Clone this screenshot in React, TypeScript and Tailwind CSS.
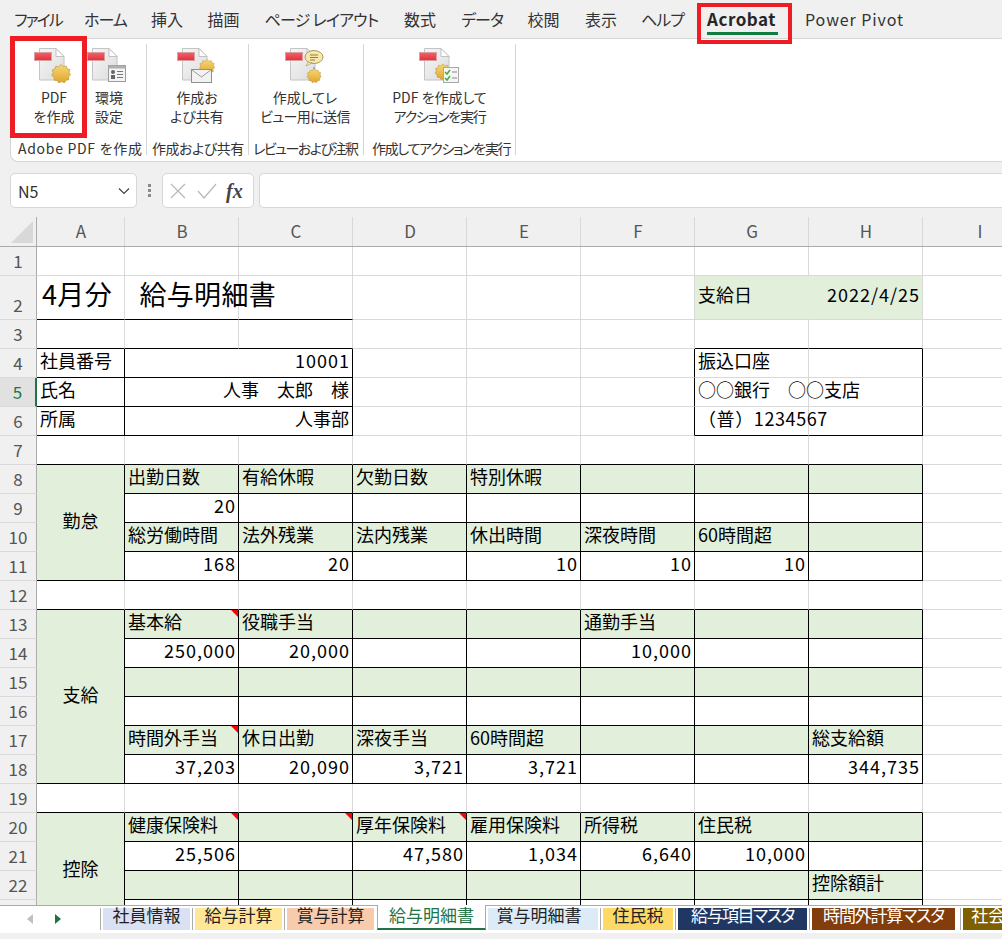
import { ReactNode } from "react";

const jp = "[font-family:'Noto_Sans_CJK_JP','Noto_Sans',sans-serif]";

const COLS = ["A", "B", "C", "D", "E", "F", "G", "H", "I"];

const rowHeights: Record<number, string> = { 2: "h-[44px]" };

const notes = ["B13", "B17", "B20", "C20", "D20"];

// cell values by address
const values: Record<string, { t: string; right?: boolean }> = {
  A2: { t: "4月分　給与明細書" },
  G2: { t: "支給日" },
  H2: { t: "2022/4/25", right: true },
  A4: { t: "社員番号" },
  B4: { t: "10001", right: true },
  A5: { t: "氏名" },
  B5: { t: "人事　太郎　様", right: true },
  A6: { t: "所属" },
  B6: { t: "人事部", right: true },
  G4: { t: "振込口座" },
  G5: { t: "○○銀行　○○支店" },
  G6: { t: "（普）1234567" },
  B8: { t: "出勤日数" },
  C8: { t: "有給休暇" },
  D8: { t: "欠勤日数" },
  E8: { t: "特別休暇" },
  B9: { t: "20", right: true },
  B10: { t: "総労働時間" },
  C10: { t: "法外残業" },
  D10: { t: "法内残業" },
  E10: { t: "休出時間" },
  F10: { t: "深夜時間" },
  G10: { t: "60時間超" },
  B11: { t: "168", right: true },
  C11: { t: "20", right: true },
  E11: { t: "10", right: true },
  F11: { t: "10", right: true },
  G11: { t: "10", right: true },
  B13: { t: "基本給" },
  C13: { t: "役職手当" },
  F13: { t: "通勤手当" },
  B14: { t: "250,000", right: true },
  C14: { t: "20,000", right: true },
  F14: { t: "10,000", right: true },
  B17: { t: "時間外手当" },
  C17: { t: "休日出勤" },
  D17: { t: "深夜手当" },
  E17: { t: "60時間超" },
  H17: { t: "総支給額" },
  B18: { t: "37,203", right: true },
  C18: { t: "20,090", right: true },
  D18: { t: "3,721", right: true },
  E18: { t: "3,721", right: true },
  H18: { t: "344,735", right: true },
  B20: { t: "健康保険料" },
  D20: { t: "厚年保険料" },
  E20: { t: "雇用保険料" },
  F20: { t: "所得税" },
  G20: { t: "住民税" },
  B21: { t: "25,506", right: true },
  D21: { t: "47,580", right: true },
  E21: { t: "1,034", right: true },
  F21: { t: "6,640", right: true },
  G21: { t: "10,000", right: true },
  H22: { t: "控除額計" },
};

const greenRows = [8, 10, 13, 15, 17, 20, 22];
const tableRows = (r: number) => (r >= 8 && r <= 11) || (r >= 13 && r <= 18) || (r >= 20 && r <= 23);

const isBottomBlack = (r: number, c: number) => {
  if (c <= 2 && r >= 2 && r <= 6) return true;
  if ((c === 6 || c === 7) && (r === 3 || r === 6)) return true;
  if (c <= 7 && [7, 11, 12, 18, 19].includes(r)) return true;
  if (c >= 1 && c <= 7 && tableRows(r)) return true;
  return false;
};

const isRightBlack = (r: number, c: number) => {
  if (r >= 4 && r <= 6 && (c === 0 || c === 2 || c === 5 || c === 7)) return true;
  if (tableRows(r) && c <= 7) return true;
  return false;
};

const textClass = (addr: string, t: string) => {
  if (addr === "A2") return "pl-[2px] text-[27px] tracking-[0.35px]";
  if (addr === "G6") return "tracking-[0.6px]";
  if (/^[\d,/]+$/.test(t)) return "-mr-[1px] tracking-[1px]";
  return "";
};

function SheetCell({ r, c }: { r: number; c: number }) {
  const addr = COLS[c] + r;
  const value = values[addr];
  const green = (c >= 1 && c <= 7 && greenRows.includes(r)) || (r === 2 && (c === 6 || c === 7));
  return (
    <div
      className={`relative flex items-center whitespace-nowrap border-r border-b px-[3px] text-[18px] leading-none text-black ${
        r === 2 ? "pb-[8px]" : "pb-[6px]"
      } ${rowHeights[r] ?? "h-[29px]"} ${green ? "bg-[#e2efda]" : "bg-white"} ${
        isRightBlack(r, c) ? "border-r-black" : r === 2 && c === 6 ? "border-r-[#e2efda]" : "border-r-[#d9d9d9]"
      } ${isBottomBlack(r, c) ? "border-b-black" : "border-b-[#d9d9d9]"} ${value?.right ? "justify-end" : "justify-start"}`}
    >
      {value ? <span className={`relative z-10 ${textClass(addr, value.t)}`}>{value.t}</span> : null}
      {notes.includes(addr) ? (
        <span className="absolute top-0 right-0 h-[7px] w-[7px] bg-[#ff0000] [clip-path:polygon(0_0,100%_0,100%_100%)]" />
      ) : null}
    </div>
  );
}

function MergedB({ r }: { r: number }) {
  const value = values["B" + r];
  return (
    <div className="col-span-2 flex h-[29px] items-center justify-end whitespace-nowrap border-r border-b border-black bg-white px-[3px] pb-[6px] text-[18px] leading-none text-black">
      <span className={textClass("B" + r, value.t)}>{value.t}</span>
    </div>
  );
}

function GreenMerged({ label, rows }: { label: string; rows: string }) {
  return (
    <div className={`flex items-center justify-center border-r border-b border-black bg-[#e2efda] pb-[5px] text-[18px] text-black ${rows}`}>
      {label}
    </div>
  );
}

function RowHeader({ r }: { r: number }) {
  const active = r === 5;
  return (
    <div
      className={`flex justify-center border-b border-b-[#d9d9d9] text-[17px] leading-none ${rowHeights[r] ?? "h-[29px]"} ${
        r === 2 ? "items-end pb-[6px]" : "items-center pb-[2px]"
      } ${
        active
          ? "border-r-2 border-r-[#217346] bg-[#e1e1e1] text-[#217346]"
          : "border-r border-r-[#ababab] bg-[#f0f0f0] text-[#555555]"
      }`}
    >
      {r}
    </div>
  );
}

function sheetRow(r: number) {
  const cells: ReactNode[] = [<RowHeader key={`h${r}`} r={r} />];
  COLS.forEach((_, c) => {
    if (c === 0 && r >= 9 && r <= 11) return;
    if (c === 0 && r >= 14 && r <= 18) return;
    if (c === 0 && r >= 21 && r <= 23) return;
    if (c === 0 && r === 8) cells.push(<GreenMerged key={`a${r}`} label="勤怠" rows="row-span-4" />);
    else if (c === 0 && r === 13) cells.push(<GreenMerged key={`a${r}`} label="支給" rows="row-span-6" />);
    else if (c === 0 && r === 20) cells.push(<GreenMerged key={`a${r}`} label="控除" rows="row-span-4" />);
    else if (c === 1 && r >= 4 && r <= 6) cells.push(<MergedB key={`b${r}`} r={r} />);
    else if (c === 2 && r >= 4 && r <= 6) return;
    else cells.push(<SheetCell key={`${r}-${c}`} r={r} c={c} />);
  });
  return cells;
}

function Burst({ x, y, s = 1 }: { x: number; y: number; s?: number }) {
  return (
    <g transform={`translate(${x} ${y}) scale(${s})`}>
      <path
        d="M0-9.5 2.4-7.3 5.2-8 6.2-5.3 9-4.4 8-1.6 9.6 0.8 7.5 2.8 7.8 5.8 4.9 6.2 3.4 8.8 0.6 7.6-2.2 9-3.7 6.4-6.7 6.2-6.9 3.2-9.3 1.4-7.8-1.2-8.8-4-6-5-5.2-7.8-2.4-7.2Z"
        fill="url(#gold)"
        stroke="#b98d2a"
        strokeWidth="0.6"
      />
    </g>
  );
}

function DocIcon({ children, className = "" }: { children?: ReactNode; className?: string }) {
  return (
    <svg viewBox="0 0 40 36" className={`h-[36px] w-[40px] shrink-0 ${className}`}>
      <defs>
        <linearGradient id="page" x1="0" y1="0" x2="1" y2="1">
          <stop offset="0" stopColor="#f6f6f6" />
          <stop offset="1" stopColor="#dcdcdc" />
        </linearGradient>
        <linearGradient id="gold" x1="0" y1="0" x2="0" y2="1">
          <stop offset="0" stopColor="#f7d873" />
          <stop offset="1" stopColor="#dfa52e" />
        </linearGradient>
        <linearGradient id="redbar" x1="0" y1="0" x2="0" y2="1">
          <stop offset="0" stopColor="#f4606a" />
          <stop offset="1" stopColor="#e0303c" />
        </linearGradient>
      </defs>
      <path d="M5.5 1.5H22L30 9.5V33H5.5Z" fill="url(#page)" stroke="#c4c4c4" />
      <path d="M22 1.5V9.5H30Z" fill="#ffffff" stroke="#b5b5b5" strokeWidth="0.8" />
      <rect x="0.5" y="5.5" width="17" height="8" fill="url(#redbar)" stroke="#d9a0a0" />
      {children}
    </svg>
  );
}

function RibbonButton({ icon, lines, className }: { icon: ReactNode; lines: ReactNode[]; className: string }) {
  return (
    <div className={`flex flex-col items-center pt-[8px] ${className}`}>
      {icon}
      <div className="mt-[5px] text-center text-[14px] leading-[19px] whitespace-nowrap text-[#333333]">
        {lines.map((line, i) => (
          <div key={i}>{line}</div>
        ))}
      </div>
    </div>
  );
}

function RibbonGroup({
  label,
  width,
  pad,
  labelClass,
  children,
}: {
  label: string;
  width: string;
  pad: string;
  labelClass: string;
  children: ReactNode;
}) {
  return (
    <div className={`relative flex shrink-0 flex-col ${width}`}>
      <div className={`flex flex-1 ${pad}`}>{children}</div>
      <div className={`pb-[4px] text-[14px] leading-[18px] whitespace-nowrap text-[#333333] ${pad} ${labelClass}`}>{label}</div>
      <div className="absolute top-[5px] right-0 h-[111px] w-px bg-[#d5d5d5]" />
    </div>
  );
}

const menu = [
  { t: "ファイル", w: "w-[68px] tracking-[-2px]" },
  { t: "ホーム", w: "w-[67px] tracking-[-1px]" },
  { t: "挿入", w: "w-[56px]" },
  { t: "描画", w: "w-[57px]" },
  { t: "ページ レイアウト", w: "w-[139px] tracking-[-0.8px]" },
  { t: "数式", w: "w-[58px]" },
  { t: "データ", w: "w-[66px] tracking-[-1px]" },
  { t: "校閲", w: "w-[57px]" },
  { t: "表示", w: "w-[58px]" },
  { t: "ヘルプ", w: "w-[65px] tracking-[-1px]" },
];

const tabs = [
  { t: "社員情報", w: "w-[87px]", c: "bg-[#d9e1f2] text-[#222222]", ml: "ml-0" },
  { t: "給与計算", w: "w-[87px]", c: "bg-[#ffe699] text-[#222222]", ml: "ml-[5px]" },
  { t: "賞与計算", w: "w-[87px]", c: "bg-[#f8cbad] text-[#222222]", ml: "ml-[5px]" },
];

const tabsAfter = [
  { t: "賞与明細書", w: "w-[110px] pr-[8px]", c: "bg-[#ddebf7] text-[#222222]", ml: "ml-[2px]" },
  { t: "住民税", w: "w-[70px]", c: "bg-[#ffd966] text-[#222222]", ml: "ml-[5px]" },
  { t: "給与項目マスタ", w: "w-[129px] tracking-[-1.5px]", c: "bg-[#203764] text-white", ml: "ml-[5px]" },
  { t: "時間外計算マスタ", w: "w-[143px] tracking-[-1.2px]", c: "bg-[#833c0b] text-white", ml: "ml-[5px]" },
  { t: "社会保険マスタ", w: "w-[130px]", c: "bg-[#7f6000] text-white", ml: "ml-[8px]" },
];

function SheetTab({ t, w, c, ml }: { t: string; w: string; c: string; ml: string }) {
  return (
    <div
      className={`flex h-[22px] shrink-0 items-start justify-center overflow-visible whitespace-nowrap text-[17px] leading-none ${w} ${c} ${ml} relative before:absolute before:top-0 before:-left-[3px] before:h-[22px] before:w-px before:bg-[#ababab]`}
    >
      <span className="-mt-[2px]">{t}</span>
    </div>
  );
}

export default function App() {
  const rowNumbers = Array.from({ length: 22 }, (_, i) => i + 2);
  return (
    <div className={`relative flex h-[939px] w-[1002px] flex-col overflow-hidden bg-[#f0f0f0] ${jp} [font-feature-settings:'palt']`}>
      {/* menu tabs */}
      <div className="flex h-[38px] shrink-0 items-center pb-[1px] pl-[4px] text-[16px] text-[#333333]">
        {menu.map((item) => (
          <div key={item.t} className={`text-center whitespace-nowrap ${item.w}`}>
            {item.t}
          </div>
        ))}
        <div className="relative h-[24px] w-[93px] text-center text-[17px] leading-[24px] font-bold tracking-[0.5px] text-[#262626]">
          Acrobat
          <span className="absolute top-[25px] left-[12px] h-[3px] w-[71px] bg-[#107c41]" />
        </div>
        <div className="ml-[17px] tracking-[0.9px] whitespace-nowrap">Power Pivot</div>
      </div>

      {/* ribbon */}
      <div className="ml-[10px] flex h-[124px] shrink-0 rounded-bl-[8px] border-t border-b border-l border-[#d5d5d5] bg-white">
        <RibbonGroup label="Adobe PDF を作成" width="w-[136px]" pad="pl-[7px]" labelClass="tracking-[0.7px]">
          <RibbonButton
            className="w-[72px]"
            lines={["PDF", "を作成"]}
            icon={
              <DocIcon>
                <Burst x={27} y={27} />
              </DocIcon>
            }
          />
          <RibbonButton
            className="w-[38px]"
            lines={["環境", "設定"]}
            icon={
              <DocIcon className="-translate-x-[2px]">
                <rect x="21.5" y="18.5" width="17" height="16" fill="#f4f4f4" stroke="#9a9a9a" />
                <rect x="21.5" y="18.5" width="17" height="3" fill="#b0b0b0" />
                <circle cx="26" cy="25" r="2" fill="#666666" />
                <rect x="24" y="28" width="4" height="4" fill="#666666" />
                <path d="M30 24.5h6M30 27.5h6M30 30.5h6" stroke="#777777" />
              </DocIcon>
            }
          />
        </RibbonGroup>
        <RibbonGroup label="作成および共有" width="w-[102px]" pad="pl-[5px]" labelClass="tracking-[-0.5px]">
          <RibbonButton
            className="w-[90px]"
            lines={["作成お", "よび共有"]}
            icon={
              <DocIcon>
                <Burst x={30} y={20} s={0.8} />
                <rect x="14.5" y="22.5" width="20" height="13" fill="#f2f2f2" stroke="#8f8f8f" />
                <path d="M14.5 22.5 24.5 30 34.5 22.5" fill="none" stroke="#9a9a9a" />
              </DocIcon>
            }
          />
        </RibbonGroup>
        <RibbonGroup label="レビューおよび注釈" width="w-[115px]" pad="pl-[4px]" labelClass="tracking-[-1.5px]">
          <RibbonButton
            className="w-[104px]"
            lines={["作成してレ", <span className="tracking-[-0.6px]">ビュー用に送信</span>]}
            icon={
              <DocIcon>
                <path d="M29 20V27" stroke="#888888" />
                <ellipse cx="29" cy="10" rx="9" ry="6.5" fill="#f8e7a8" stroke="#a89a60" />
                <path d="M23 15 21 19 27 16Z" fill="#f8e7a8" stroke="#a89a60" strokeWidth="0.6" />
                <path d="M25 8h8M25 10.5h8M25 13h5" stroke="#8d8250" />
                <Burst x={29} y={29} s={0.75} />
              </DocIcon>
            }
          />
        </RibbonGroup>
        <RibbonGroup label="作成してアクションを実行" width="w-[152px]" pad="pl-[8px]" labelClass="tracking-[-1.3px]">
          <RibbonButton
            className="w-[135px]"
            lines={["PDF を作成して", <span className="tracking-[-1.2px]">アクションを実行</span>]}
            icon={
              <DocIcon className="-translate-x-[1px]">
                <Burst x={24} y={25} s={0.85} />
                <rect x="24.5" y="20.5" width="15" height="15" fill="#f5f5f5" stroke="#a8a8a8" />
                <path d="M26 25l2 2 3-4M26 31l2 2 3-4" fill="none" stroke="#4aa83c" strokeWidth="1.5" />
                <path d="M33 25h5M33 31h5" stroke="#888888" />
              </DocIcon>
            }
          />
        </RibbonGroup>
      </div>

      {/* formula bar */}
      <div className="mt-[11px] flex h-[35px] shrink-0 items-stretch pl-[10px] text-[#333333]">
        <div className="flex w-[127px] items-center justify-between rounded-[5px] border border-[#d6d6d6] bg-white pr-[6px] pl-[7px] text-[16px]">
          N5
          <svg viewBox="0 0 12 8" className="h-[8px] w-[12px]">
            <path d="M1 1.5 6 6.5 11 1.5" fill="none" stroke="#444444" strokeWidth="1.2" />
          </svg>
        </div>
        <div className="flex w-[25px] flex-col items-center justify-center gap-[2px]">
          <span className="h-[3px] w-[3px] bg-[#8a8a8a]" />
          <span className="h-[3px] w-[3px] bg-[#8a8a8a]" />
          <span className="h-[3px] w-[3px] bg-[#8a8a8a]" />
        </div>
        <div className="flex w-[92px] items-center gap-[12px] rounded-[5px] border border-[#d6d6d6] bg-white pl-[7px]">
          <svg viewBox="0 0 16 16" className="h-[16px] w-[16px]">
            <path d="M1 1 15 15M15 1 1 15" stroke="#b8b8b8" strokeWidth="1.2" />
          </svg>
          <svg viewBox="0 0 20 16" className="-ml-[1px] h-[16px] w-[20px]">
            <path d="M1 8 7 15 19 1" fill="none" stroke="#b8b8b8" strokeWidth="1.2" />
          </svg>
          <span className="-ml-[3px] font-['Liberation_Serif',serif] text-[20px] font-bold italic text-[#444444]">fx</span>
        </div>
        <div className="ml-[5px] flex-1 rounded-l-[5px] border border-r-0 border-[#d6d6d6] bg-white" />
      </div>

      {/* sheet */}
      <div className="mt-[9px] min-h-0 flex-1 overflow-hidden">
        <div className="grid grid-cols-[37px_88px_repeat(8,114px)] [font-feature-settings:normal] [grid-auto-rows:min-content]">
          <div className="relative h-[30px] border-r border-b border-[#ababab] bg-[#f0f0f0]">
            <span className="absolute right-[3px] bottom-[3px] h-[22px] w-[22px] bg-[#d8d8d8] [clip-path:polygon(100%_0,100%_100%,0_100%)]" />
          </div>
          {COLS.map((col) => (
            <div
              key={col}
              className="flex h-[30px] items-center justify-center border-b border-b-[#ababab] bg-[#f0f0f0] pb-[2px] text-[17px] text-[#555555] shadow-[inset_-1px_0_0_#d8d8d8]"
            >
              {col}
            </div>
          ))}
          <RowHeader r={1} />
          {COLS.map((_, c) => (
            <SheetCell key={c} r={1} c={c} />
          ))}
          {rowNumbers.map((r) => sheetRow(r))}
        </div>
      </div>

      {/* sheet tabs */}
      <div className="h-[34px] shrink-0">
        <div className="h-[28px] border-t border-[#ababab] bg-white">
          <div className="flex pt-[2px]">
            <div className="flex h-[22px] w-[103px] shrink-0 items-center gap-[22px] pl-[27px]">
              <span className="h-0 w-0 border-y-[5px] border-r-[6px] border-y-transparent border-r-[#c0c0c0]" />
              <span className="h-0 w-0 border-y-[5px] border-l-[6px] border-y-transparent border-l-[#217346]" />
            </div>
            {tabs.map((tab) => (
              <SheetTab key={tab.t} {...tab} />
            ))}
            <div className="relative z-10 -mt-[3px] ml-[3px] flex h-[25px] w-[109px] shrink-0 justify-center border-x border-b-2 border-x-[#ababab] border-b-[#217346] bg-white text-[17px] leading-none whitespace-nowrap text-[#217346]">
              <span className="mt-[1px]">給与明細書</span>
            </div>
            {tabsAfter.map((tab) => (
              <SheetTab key={tab.t} {...tab} />
            ))}
          </div>
        </div>
      </div>

      {/* red annotation boxes */}
      <div className="absolute top-[3px] left-[697px] h-[41px] w-[95px] border-[4px] border-[#ee1c25]" />
      <div className="absolute top-[36px] left-[10px] h-[102px] w-[77px] border-[5px] border-[#ee1c25]" />
    </div>
  );
}
